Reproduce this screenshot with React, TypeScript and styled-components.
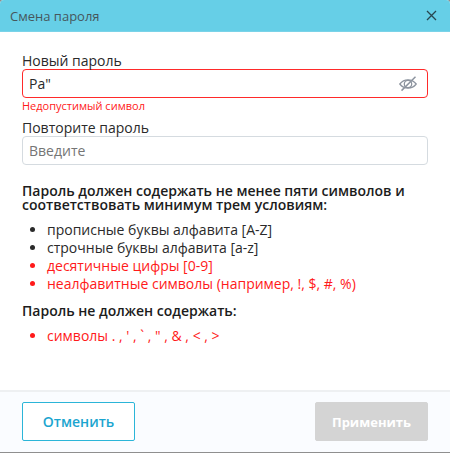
import React, { useState } from "react";
import styled, { createGlobalStyle } from "styled-components";

const GlobalStyle = createGlobalStyle`
  *, *::before, *::after { box-sizing: border-box; }
  body {
    margin: 0;
    background: #8f8f8f;
    color: #2a2a2a;
    font-family: "Open Sans", "Noto Sans", sans-serif;
    font-size: 14px;
  }
  button, input { font-family: inherit; }
`;

const Dialog = styled.section`
  display: flex;
  flex-direction: column;
  min-height: calc(100vh - 1px);
  background: #fff;
  border-radius: 4px 4px 0 0;
  overflow: hidden;
`;

const Header = styled.header`
  display: flex;
  align-items: center;
  justify-content: space-between;
  height: 32px;
  padding: 0 12px 0 10px;
  background: #66cfe7;
  border-bottom: 1px solid #7ad3e8;
`;

const Title = styled.h1`
  margin: 0;
  font-size: 13px;
  font-weight: 400;
  line-height: 18px;
  color: #46575d;
`;

const IconButton = styled.button`
  display: flex;
  padding: 0;
  border: 0;
  background: none;
  color: ${(p) => p.color};
  cursor: pointer;
`;

const Form = styled.form`
  display: flex;
  flex: 1;
  flex-direction: column;
`;

const Body = styled.div`
  flex: 1;
  padding: 20px 22px;
`;

const Label = styled.label`
  display: block;
  font-size: 14px;
  line-height: 17px;
`;

const InputBox = styled.div<{ $invalid?: boolean }>`
  display: flex;
  align-items: center;
  height: 29px;
  padding: 0 10px 0 6px;
  border: 1px solid ${(p) => (p.$invalid ? "#ff2a2a" : "#d5dbe0")};
  border-radius: 4px;
  background: #fff;
`;

const Input = styled.input`
  flex: 1;
  min-width: 0;
  padding: 0;
  border: 0;
  outline: 0;
  background: transparent;
  font-size: 14px;
  color: #2a2a2a;
  &::placeholder { color: #757575; opacity: 1; }
`;

const ErrorText = styled.p`
  margin: 0 0 6px;
  font-size: 11px;
  line-height: 15px;
  color: #ff1a1a;
`;

const RulesTitle = styled.h2<{ $first?: boolean }>`
  margin: ${(p) => (p.$first ? "19px" : "11px")} 0 9px;
  font-size: 14px;
  font-weight: 600;
  line-height: 14px;
  color: #1c1c1c;
`;

const Rules = styled.ul`
  margin: 0;
  padding: 0 0 0 25px;
`;

const Rule = styled.li<{ $failed?: boolean }>`
  line-height: 18px;
  color: ${(p) => (p.$failed ? "#ff1a1a" : "#2a2a2a")};
`;

const Footer = styled.footer`
  display: flex;
  justify-content: space-between;
  padding: 10px 22px 11px;
  border-top: 2px solid #eef0f2;
  background: #fafcff;
`;

const Button = styled.button`
  min-width: 113px;
  height: 39px;
  padding: 0 15px;
  border: 1px solid #2bb5d8;
  border-radius: 2px;
  background: #fff;
  color: #1ba5cf;
  font-size: 14px;
  font-weight: 600;
  cursor: pointer;
  &:disabled {
    border-color: #d4d4d4;
    background: #d4d4d4;
    color: #fff;
    font-size: 13px;
    font-weight: 700;
    cursor: default;
  }
`;

const CloseIcon = () => (
  <svg width="13" height="13" viewBox="0 0 13 13" fill="none" stroke="currentColor" strokeWidth="1.3" aria-hidden="true">
    <path d="M2 2l9 9M11 2l-9 9" />
  </svg>
);

const HiddenEyeIcon = () => (
  <svg width="18" height="16" viewBox="0 0 18 16" fill="none" stroke="currentColor" strokeWidth="1.3" aria-hidden="true">
    <path d="M.8 8C3 5.200 5.700 3.900 9 3.900S15 5.200 17.200 8C15 10.800 12.300 12.100 9 12.100S3 10.800.8 8z" />
    <circle cx="9" cy="8" r="3.700" />
    <path d="M2.500 14.600L16.500.8" strokeWidth="1.500" />
  </svg>
);

const requirements = [
  { text: "прописные буквы алфавита [A-Z]", failed: false },
  { text: "строчные буквы алфавита [a-z]", failed: false },
  { text: "десятичные цифры [0-9]", failed: true },
  { text: "неалфавитные символы (например, !, $, #, %)", failed: true },
];

export default function App() {
  const [password, setPassword] = useState('Pa"');
  const [visible, setVisible] = useState(true);

  return (
    <>
      <GlobalStyle />
      <Dialog role="dialog" aria-labelledby="dialog-title">
        <Header>
          <Title id="dialog-title">Смена пароля</Title>
          <IconButton type="button" color="#28464f" aria-label="Закрыть">
            <CloseIcon />
          </IconButton>
        </Header>
        <Form onSubmit={(e) => e.preventDefault()}>
          <Body>
            <Label htmlFor="new-password">Новый пароль</Label>
            <InputBox $invalid>
              <Input
                id="new-password"
                type={visible ? "text" : "password"}
                value={password}
                onChange={(e) => setPassword(e.target.value)}
                spellCheck={false}
                aria-invalid
                aria-describedby="password-error"
              />
              <IconButton type="button" color="#8d949f" aria-label="Показать или скрыть пароль" onClick={() => setVisible(!visible)}>
                <HiddenEyeIcon />
              </IconButton>
            </InputBox>
            <ErrorText id="password-error">Недопустимый символ</ErrorText>
            <Label htmlFor="repeat-password">Повторите пароль</Label>
            <InputBox>
              <Input id="repeat-password" type="password" placeholder="Введите" />
            </InputBox>
            <RulesTitle $first>
              Пароль должен содержать не менее пяти символов и соответствовать минимум трем условиям:
            </RulesTitle>
            <Rules>
              {requirements.map((r) => (
                <Rule key={r.text} $failed={r.failed}>{r.text}</Rule>
              ))}
            </Rules>
            <RulesTitle>Пароль не должен содержать:</RulesTitle>
            <Rules>
              <Rule $failed>{"символы . , ' , ` , \" , & , < , >"}</Rule>
            </Rules>
          </Body>
          <Footer>
            <Button type="button">Отменить</Button>
            <Button type="submit" disabled>Применить</Button>
          </Footer>
        </Form>
      </Dialog>
    </>
  );
}
